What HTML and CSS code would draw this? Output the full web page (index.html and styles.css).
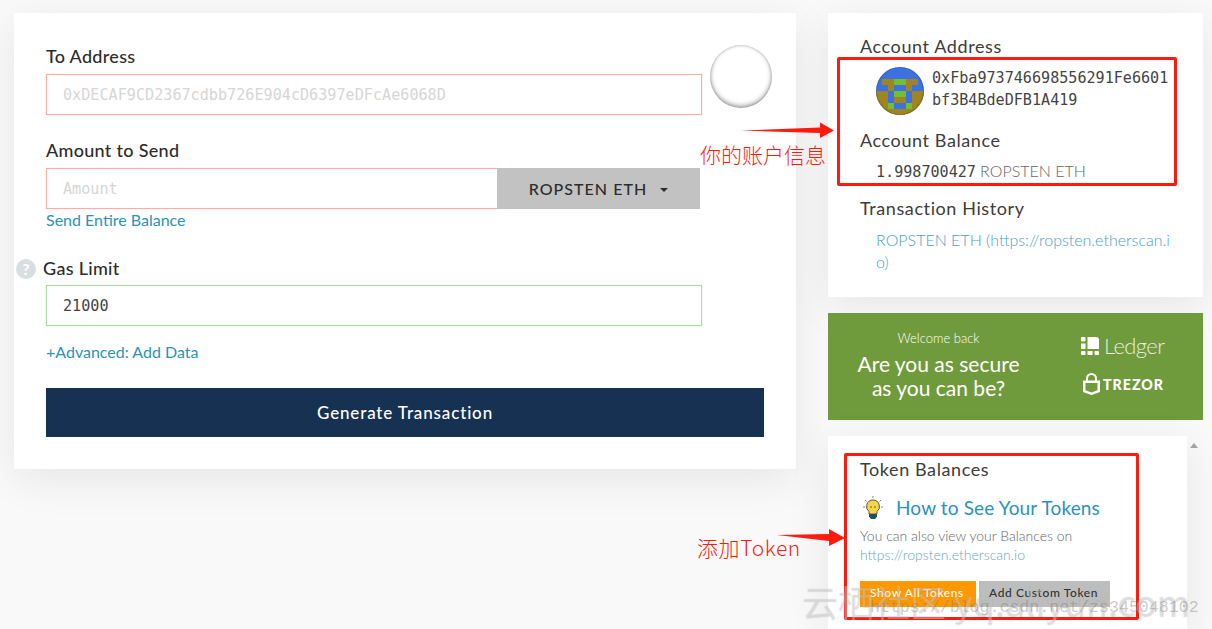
FILE: index.html
```html
<!DOCTYPE html>
<html lang="en">
<head>
    <meta charset="UTF-8">
    <title>Send Ether &amp; Tokens</title>
    <link rel="stylesheet" href="styles.css">
</head>
<body>
    <main class="page">
        <section class="card sendCard">
            <div class="addressRow">
                <div class="field">
                    <label class="fieldLabel">To Address</label>
                    <input class="inputBox invalid" type="text" placeholder="0xDECAF9CD2367cdbb726E904cD6397eDFcAe6068D">
                </div>
                <div class="blankIdenticon"></div>
            </div>

            <label class="fieldLabel amountLabel">Amount to Send</label>
            <div class="amountGroup">
                <input class="inputBox invalid amountInput" type="text" placeholder="Amount">
                <a class="unitBtn">ROPSTEN ETH <span class="caret"></span></a>
            </div>
            <a class="link sendEntire">Send Entire Balance</a>

            <div class="gasLabel">
                <span class="helpIcon">?</span>
                <label class="fieldLabel">Gas Limit</label>
            </div>
            <input class="inputBox valid gasInput" type="text" value="21000">

            <a class="link advanced">+Advanced: Add Data</a>
            <a class="generateBtn">Generate Transaction</a>
        </section>

        <aside class="sidebar">
            <section class="card infoCard">
                <h5 class="sideTitle">Account Address</h5>
                <div class="accountRow">
                    <svg class="identicon" viewBox="0 0 8 8" width="48" height="48" shape-rendering="crispEdges">
                        <defs><clipPath id="round"><circle cx="4" cy="4" r="4"/></clipPath></defs>
                        <g clip-path="url(#round)">
                            <rect width="8" height="8" fill="#3b71e0"/>
                            <path fill="#a08420" d="M1 2h2v1H1zM5 2h2v1H5zM2 3h1v1H2zM5 3h1v1H5zM0 4h2v3H0zM6 4h2v3H6zM3 5h2v1H3zM0 7h8v1H0z"/>
                            <path fill="#72c02c" d="M3 2h2v1H3zM3 4h2v1H3zM2 6h1v1H2zM5 6h1v1H5z"/>
                        </g>
                        <circle cx="4" cy="4" r="3.9" fill="none" stroke="#000" stroke-opacity=".12" stroke-width=".2"/>
                    </svg>
                    <div class="mono accountAddress">0xFba973746698556291Fe6601bf3B4BdeDFB1A419</div>
                </div>
                <h5 class="sideTitle balanceTitle">Account Balance</h5>
                <div class="balance"><span class="mono">1.998700427</span> <span class="unit">ROPSTEN ETH</span></div>
                <h5 class="sideTitle historyTitle">Transaction History</h5>
                <a class="historyLink">ROPSTEN ETH (https://ropsten.etherscan.io)</a>
            </section>

            <section class="promo">
                <div class="promoText">
                    <p class="welcome">Welcome back</p>
                    <p class="promoHead">Are you as secure<br>as you can be?</p>
                </div>
                <div class="promoLogos">
                    <div class="logo ledger">
                        <svg width="18" height="18" viewBox="0 0 18 18" fill="#fff">
                            <path d="M6.500 0H15a3 3 0 0 1 3 3v9H6.500z"/>
                            <rect y="0" width="4.500" height="4.500" rx="1"/>
                            <rect y="6.500" width="4.500" height="5.500"/>
                            <rect y="14" width="4.500" height="4" rx="1"/>
                            <rect x="6.500" y="14" width="5" height="4"/>
                            <rect x="13.500" y="14" width="4.500" height="4" rx="1"/>
                        </svg>
                        <span>Ledger</span>
                    </div>
                    <div class="logo trezor">
                        <svg width="17" height="22" viewBox="0 0 17 22" fill="none" stroke="#fff">
                            <path stroke-width="2" d="M4 8V5.500a4.500 4.500 0 0 1 9 0V8"/>
                            <path fill="#fff" stroke="none" d="M0 7.500h17V19l-8.500 3L0 19zM2.500 10v7.300l6 2.100 6-2.100V10z"/>
                        </svg>
                        <span>TREZOR</span>
                    </div>
                </div>
            </section>

            <section class="tokenWrap">
                <div class="card tokenCard">
                    <h5 class="sideTitle">Token Balances</h5>
                    <div class="howTo">
                        <svg width="20" height="24" viewBox="0 0 20 24">
                            <path stroke="#888" stroke-width="1" d="M10 0v2M2 4l1.500 1.500M18 4l-1.500 1.500M0 11h2M18 11h2"/>
                            <path fill="#f7d548" stroke="#333" stroke-width=".8" d="M10 4a6.500 6.500 0 0 0-4 11.600V18h8v-2.400A6.500 6.500 0 0 0 10 4z"/>
                            <path fill="#1f4f63" d="M6 18h8v2.500l-2 2.500H8l-2-2.500z"/>
                            <circle cx="8" cy="11" r=".7" fill="#333"/>
                            <circle cx="12" cy="11" r=".7" fill="#333"/>
                        </svg>
                        <a class="link howToLink">How to See Your Tokens</a>
                    </div>
                    <p class="tokenNote">You can also view your Balances on<br><a class="tokenUrl">https://ropsten.etherscan.io</a></p>
                    <div class="tokenBtns">
                        <a class="tokenBtn showAll">Show All Tokens</a>
                        <a class="tokenBtn addCustom">Add Custom Token</a>
                    </div>
                </div>
                <span class="scrollArrow"></span>
            </section>
        </aside>
    </main>

    <!-- annotations drawn over the screenshot -->
    <div class="markBox markAccount"></div>
    <div class="markBox markToken"></div>
    <svg class="arrows" width="1212" height="629" fill="#ff1a0e">
        <path d="M741 130.500L820 127.500V122.500L834 130.500L820 138V133z"/>
        <path d="M777 535L829 534V529L845 538L829 546V541z"/>
    </svg>
    <span class="note noteAccount">你的账户信息</span>
    <span class="note noteToken">添加Token</span>

    <span class="watermark">云栖社区 yq.aliyun.com</span>
    <span class="watermarkUrl">https://blog.csdn.net/zs345048102</span>
</body>
</html>
```

FILE: styles.css
```css
body {
    margin: 0;
    height: 629px;
    overflow: hidden;
    background-color: #f9f9f9;
    font-family: Lato, "Open Sans", sans-serif;
    color: #333;
}

.page {
    display: flex;
    align-items: flex-start;
    padding: 13px 0 0 14px;
}

.card {
    background: #fff;
    box-sizing: border-box;
    box-shadow: 0 10px 40px rgba(0, 0, 0, 0.08);
}

.mono {
    font-family: "DejaVu Sans Mono", monospace;
    color: #444;
}

.link {
    display: block;
    color: #2a93bb;
    font-size: 16px;
    line-height: 22px;
}

/* left card */
.sendCard {
    width: 782px;
    height: 456px;
    padding: 32px 32px 0;
}

.addressRow {
    display: flex;
    align-items: flex-start;
    gap: 8px;
}

.field {
    flex: none;
    width: 656px;
}

.fieldLabel {
    display: block;
    font-size: 18px;
    font-weight: 500;
    letter-spacing: 0.3px;
    line-height: 22px;
    color: #2c2c2c;
}

.inputBox {
    display: block;
    box-sizing: border-box;
    width: 656px;
    height: 41px;
    margin-top: 7px;
    padding: 1px 16px 0;
    background: #fff;
    font-family: "DejaVu Sans Mono", monospace;
    font-size: 15.15px;
    color: #444;
    border: 1px solid;
    border-radius: 0;
    outline: 0;
}

.inputBox::placeholder {
    color: #d6d6d6;
}

.invalid {
    border-color: #ffaca5;
    box-shadow: 0 0 1px rgba(255, 170, 160, 0.7);
}

.valid {
    border-color: #aadda2;
    box-shadow: 0 0 1px rgba(170, 221, 162, 0.7);
}

.blankIdenticon {
    flex: none;
    width: 62px;
    height: 63px;
    border-radius: 50%;
    background: #fff;
    box-shadow: inset 0 -2px 5px rgba(0, 0, 0, 0.35), inset 0 0 3px rgba(0, 0, 0, 0.25);
}

.amountLabel {
    margin-top: 24px;
}

.amountGroup {
    display: flex;
    width: 654px;
    margin-top: 7px;
}

.amountInput {
    flex: 1;
    margin-top: 0;
    border-right: 0;
}

.unitBtn {
    display: flex;
    align-items: center;
    justify-content: center;
    gap: 13px;
    box-sizing: border-box;
    width: 203px;
    height: 41px;
    background: #c2c2c2;
    font-size: 16px;
    font-weight: 500;
    letter-spacing: 1.05px;
    color: #2c2c2c;
}

.caret {
    border-top: 4px solid #2c2c2c;
    border-left: 4px solid transparent;
    border-right: 4px solid transparent;
    margin-top: 2px;
}

.sendEntire {
    margin-top: 0;
}

.gasLabel {
    display: flex;
    align-items: center;
    gap: 7px;
    margin: 25px 0 0 -30px;
}

.helpIcon {
    width: 20px;
    height: 20px;
    margin-top: 3px;
    border-radius: 50%;
    background: #d7dfe1;
    color: #fff;
    font-size: 15px;
    font-weight: 700;
    line-height: 20px;
    text-align: center;
}

.gasInput {
    margin-top: 6px;
}

.advanced {
    margin-top: 15px;
}

.generateBtn {
    display: block;
    height: 49px;
    margin-top: 25px;
    background: #163151;
    color: #fff;
    font-size: 17px;
    font-weight: 500;
    letter-spacing: 0.85px;
    line-height: 49px;
    text-align: center;
}

/* right column */
.sidebar {
    display: flex;
    flex-direction: column;
    gap: 16px;
    width: 375px;
    margin-left: 32px;
}

.infoCard {
    height: 284px;
    padding: 22px 32px 0;
}

.sideTitle {
    margin: 0;
    font-size: 18px;
    font-weight: 400;
    letter-spacing: 0.6px;
    line-height: 22px;
    color: #3c3c3c;
}

.accountRow {
    display: flex;
    align-items: flex-start;
    gap: 8px;
    margin: 10px 0 0 16px;
}

.identicon {
    flex: none;
}

.accountAddress {
    width: 238px;
    font-size: 15.1px;
    line-height: 22px;
    word-break: break-all;
}

.balanceTitle {
    margin-top: 14px;
}

.balance {
    margin: 9px 0 0 16px;
    font-size: 16px;
    line-height: 22px;
}

.balance .mono {
    font-size: 15.1px;
}

.unit {
    font-weight: 300;
    color: #666;
}

.historyTitle {
    margin-top: 14px;
}

.historyLink {
    display: block;
    width: 296px;
    margin: 10px 0 0 16px;
    font-size: 16px;
    font-weight: 300;
    line-height: 22px;
    color: #4a9fc9;
    word-break: break-all;
}

.promo {
    display: flex;
    box-sizing: border-box;
    height: 107px;
    background: #6f9b3d;
    color: #fff;
}

.promoText {
    width: 221px;
    padding-top: 17px;
    text-align: center;
}

.promoText p {
    margin: 0;
}

.welcome {
    font-size: 13px;
    font-weight: 300;
    line-height: 17px;
}

.promoText .promoHead {
    margin-top: 5px;
    font-size: 21px;
    line-height: 23.500px;
}

.promoLogos {
    display: flex;
    flex-direction: column;
    gap: 16px;
    padding: 22px 0 0 32px;
}

.logo {
    display: flex;
    align-items: center;
    gap: 5px;
}

.ledger span {
    font-size: 22px;
    font-weight: 300;
    letter-spacing: -0.6px;
    line-height: 22px;
    color: rgba(255, 255, 255, 0.85);
}

.trezor {
    margin-left: 2px;
    gap: 3px;
}

.trezor span {
    font-size: 14.200px;
    font-weight: 900;
    letter-spacing: 1px;
}

.tokenWrap {
    display: flex;
}

.tokenCard {
    width: 359px;
    height: 193px;
    padding: 23px 32px 0;
}

.tokenCard .sideTitle {
    margin-top: -1px;
}

.howTo {
    display: flex;
    align-items: center;
    gap: 13px;
    margin: 13px 0 0 3px;
    height: 30px;
}

.howToLink {
    font-size: 19px;
    letter-spacing: 0.15px;
}

.tokenNote {
    margin: 3px 0 0;
    font-size: 14px;
    font-weight: 300;
    line-height: 19px;
    color: #666;
}

.tokenUrl {
    color: #6ea3c4;
}

.tokenBtns {
    display: flex;
    gap: 3px;
    margin-top: 17px;
}

.tokenBtn {
    height: 26px;
    padding: 0 10px;
    font-size: 12px;
    font-weight: 500;
    letter-spacing: 0.6px;
    line-height: 24px;
    white-space: nowrap;
}

.showAll {
    width: 116px;
    box-sizing: border-box;
    background: #ff9800;
    color: #fff;
}

.addCustom {
    width: 131px;
    box-sizing: border-box;
    background: #bdbdbd;
    color: #333;
}

.scrollArrow {
    margin: 7px 0 0 3px;
    width: 0;
    height: 0;
    border-bottom: 5px solid #a3a3a3;
    border-left: 4px solid transparent;
    border-right: 4px solid transparent;
}

/* annotations */
.markBox {
    position: absolute;
    box-sizing: border-box;
    border: 3px solid #ff1a0e;
    border-radius: 2px;
}

.markAccount {
    left: 837px;
    top: 57px;
    width: 340px;
    height: 129px;
}

.markToken {
    left: 844px;
    top: 453px;
    width: 295px;
    height: 167px;
}

.arrows {
    position: absolute;
    left: 0;
    top: 0;
}

.note {
    position: absolute;
    font-family: "Noto Sans CJK SC", sans-serif;
    font-size: 21px;
    font-weight: 300;
    line-height: 28px;
    color: #ff1a0e;
}

.noteAccount {
    left: 700px;
    top: 140px;
}

.noteToken {
    left: 697px;
    top: 533px;
    letter-spacing: 0.6px;
}

.watermark {
    position: absolute;
    left: 802px;
    top: 578px;
    font-family: "Noto Sans CJK SC", sans-serif;
    font-size: 36px;
    line-height: 46px;
    white-space: nowrap;
    color: rgba(255, 255, 255, 0.4);
    text-shadow: 0 0 1px rgba(0, 0, 0, 0.22);
}

.watermarkUrl {
    position: absolute;
    left: 870px;
    top: 598px;
    font-family: "Liberation Mono", monospace;
    font-size: 16.600px;
    line-height: 20px;
    white-space: nowrap;
    color: rgba(120, 120, 120, 0.4);
}
```
